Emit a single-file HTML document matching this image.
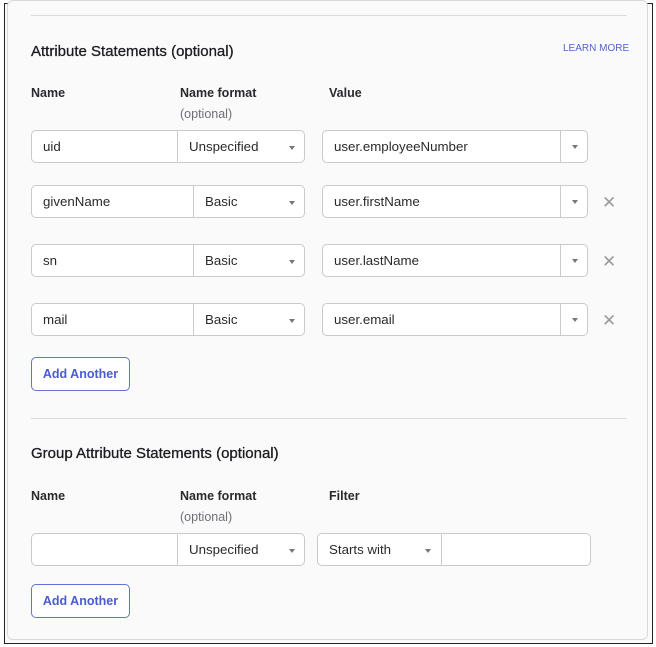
<!DOCTYPE html>
<html><head><style>
*{box-sizing:border-box;margin:0;padding:0}
body{width:656px;height:647px;background:#fff;font-family:"Liberation Sans",sans-serif;position:relative;overflow:hidden;color:#1d1d21}
.frame{position:absolute;left:4px;top:3px;width:649px;height:641px;border:1.5px solid #222;background:#fafafa}
.card{position:absolute;left:7px;top:-2px;width:641px;height:641px;border:1px solid #d8d8dc;border-radius:6px;background:#fafafa}
.a{position:absolute}
.line{position:absolute;left:31px;width:596px;height:1px;background:#dcdcdf}
h2{position:absolute;font-size:15px;font-weight:normal;color:#1d1d21;left:31px;-webkit-text-stroke:0.3px #1d1d21}
.lbl{position:absolute;font-size:12.5px;font-weight:bold;color:#2a2a2e}
.opt{position:absolute;font-size:12.5px;color:#6e6e78}
.box{position:absolute;border:1px solid #c9c9ce;background:#fff;font-size:13.3px;color:#2a2a2e;padding-left:11px;display:flex;align-items:center}
.l{border-radius:5px 0 0 5px}
.r{border-radius:0 5px 5px 0;border-left:none}
.arr{position:absolute;width:0;height:0;border-left:3px solid transparent;border-right:3px solid transparent;border-top:4px solid #777}
.x{position:absolute;font-size:17px;color:#9a9aa0;left:602px}
.btn{position:absolute;left:31px;width:99px;height:34px;border:1px solid #6573d6;border-radius:5px;color:#4a5ad0;font-size:12.5px;font-weight:bold;display:flex;align-items:center;justify-content:center;background:#fff}
</style></head><body>
<div class="frame"></div>
<div class="card" style="top:0;height:640px"></div>
<div class="line" style="top:15px"></div>
<h2 style="top:43px">Attribute Statements (optional)</h2>
<div class="a" style="left:563px;top:43px;font-size:10px;color:#5563cf">LEARN MORE</div>
<div class="lbl" style="left:31px;top:86px">Name</div>
<div class="lbl" style="left:180px;top:86px">Name format</div>
<div class="opt" style="left:180px;top:107px">(optional)</div>
<div class="lbl" style="left:329px;top:86px">Value</div>

<div class="box l" style="left:31px;top:130px;width:147px;height:33px">uid</div>
<div class="box r" style="left:177px;top:130px;width:128px;height:33px;border-left:1px solid #c9c9ce">Unspecified</div>
<div class="arr" style="left:289px;top:146px"></div>
<div class="box l" style="left:322px;top:130px;width:239px;height:33px">user.employeeNumber</div>
<div class="box r" style="left:560px;top:130px;width:28px;height:33px;border-left:1px solid #c9c9ce"></div>
<div class="arr" style="left:572px;top:145px"></div>

<div class="box l" style="left:31px;top:185px;width:163px;height:33px">givenName</div>
<div class="box r" style="left:193px;top:185px;width:112px;height:33px;border-left:1px solid #c9c9ce">Basic</div>
<div class="arr" style="left:289px;top:201px"></div>
<div class="box l" style="left:322px;top:185px;width:239px;height:33px">user.firstName</div>
<div class="box r" style="left:560px;top:185px;width:28px;height:33px;border-left:1px solid #c9c9ce"></div>
<div class="arr" style="left:572px;top:200px"></div>
<div class="x" style="top:193px">✕</div>

<div class="box l" style="left:31px;top:244px;width:163px;height:33px">sn</div>
<div class="box r" style="left:193px;top:244px;width:112px;height:33px;border-left:1px solid #c9c9ce">Basic</div>
<div class="arr" style="left:289px;top:260px"></div>
<div class="box l" style="left:322px;top:244px;width:239px;height:33px">user.lastName</div>
<div class="box r" style="left:560px;top:244px;width:28px;height:33px;border-left:1px solid #c9c9ce"></div>
<div class="arr" style="left:572px;top:259px"></div>
<div class="x" style="top:252px">✕</div>

<div class="box l" style="left:31px;top:303px;width:163px;height:33px">mail</div>
<div class="box r" style="left:193px;top:303px;width:112px;height:33px;border-left:1px solid #c9c9ce">Basic</div>
<div class="arr" style="left:289px;top:319px"></div>
<div class="box l" style="left:322px;top:303px;width:239px;height:33px">user.email</div>
<div class="box r" style="left:560px;top:303px;width:28px;height:33px;border-left:1px solid #c9c9ce"></div>
<div class="arr" style="left:572px;top:318px"></div>
<div class="x" style="top:311px">✕</div>

<div class="btn" style="top:357px">Add Another</div>
<div class="line" style="top:418px"></div>
<h2 style="top:445px">Group Attribute Statements (optional)</h2>
<div class="lbl" style="left:31px;top:489px">Name</div>
<div class="lbl" style="left:180px;top:489px">Name format</div>
<div class="opt" style="left:180px;top:510px">(optional)</div>
<div class="lbl" style="left:329px;top:489px">Filter</div>

<div class="box l" style="left:31px;top:533px;width:147px;height:33px"></div>
<div class="box r" style="left:177px;top:533px;width:128px;height:33px;border-left:1px solid #c9c9ce">Unspecified</div>
<div class="arr" style="left:289px;top:549px"></div>
<div class="box l" style="left:317px;top:533px;width:125px;height:33px">Starts with</div>
<div class="arr" style="left:425px;top:549px"></div>
<div class="box r" style="left:441px;top:533px;width:150px;height:33px;border-left:1px solid #c9c9ce"></div>

<div class="btn" style="top:584px">Add Another</div>
</body></html>
